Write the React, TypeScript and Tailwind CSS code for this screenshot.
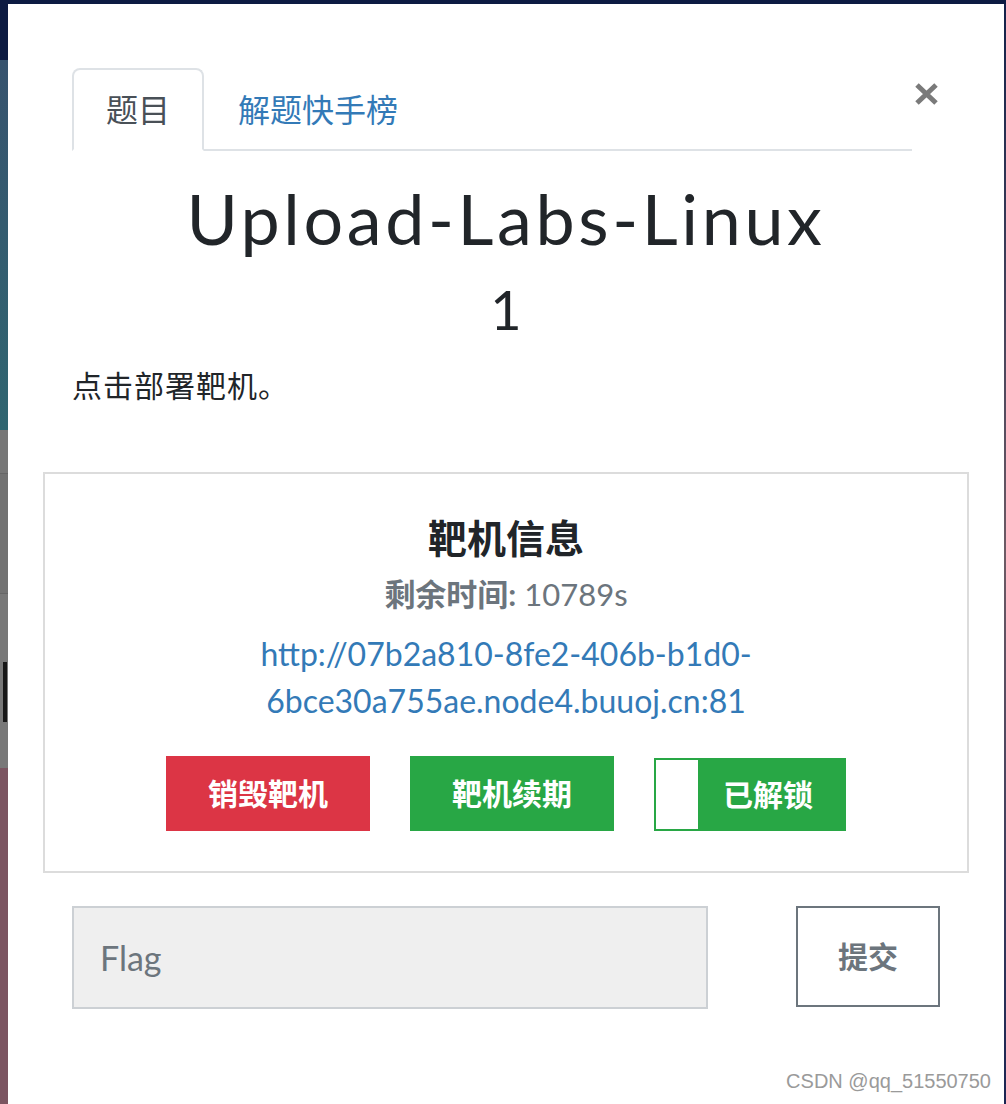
import { useState } from "react";

const font = { fontFamily: "Lato, 'Noto Sans CJK SC', sans-serif" };

// left edge of the page behind the modal overlay
const LeftEdge = () => (
  <div className="flex w-[8px] shrink-0 flex-col">
    <div className="h-[56px] bg-[#0d1b42]" />
    <div className="h-[370px] bg-gradient-to-b from-[#37536e] to-[#2f6570]" />
    <div className="h-[44px] border-b border-[#666] bg-[#777]" />
    <div className="h-[120px] border-b border-[#666] bg-[#727272]" />
    <div className="h-[68px] bg-[#787878]" />
    <div className="flex h-[60px] bg-[#787878] pl-[3px]">
      <div className="w-[4px] bg-[#181818]" />
    </div>
    <div className="h-[46px] bg-[#787878]" />
    <div className="flex-1 bg-[#7b5561]" />
  </div>
);

const RightEdge = () => (
  <div className="w-[3px] shrink-0 bg-gradient-to-b from-[#13214a] via-[#6d5a64] to-[#1a2452]" />
);

export default function App() {
  const [tab, setTab] = useState("challenge");
  const [flag, setFlag] = useState("");

  return (
    <div className="flex h-[1104px] w-[1006px] flex-col overflow-hidden bg-[#0d1b42]" style={font}>
      <div className="h-[4px] shrink-0 bg-[#0d1b42]" />
      <div className="flex flex-1">
        <LeftEdge />
        <div className="flex flex-1 flex-col bg-white px-[35px] pt-[64px]">
          {/* tabs + close */}
          <div className="flex items-start px-[29px]">
            <nav className="flex w-[840px] border-b-2 border-[#dee2e6]">
              <button
                onClick={() => setTab("challenge")}
                className={`-mb-[2px] h-[83px] rounded-t-[8px] border-2 px-[32px] text-[32px] ${
                  tab === "challenge"
                    ? "border-[#dee2e6] border-b-white bg-white text-[#495057]"
                    : "border-transparent text-[#337ab7]"
                }`}
              >
                题目
              </button>
              <button
                onClick={() => setTab("solves")}
                className={`-mb-[2px] h-[83px] rounded-t-[8px] border-2 px-[32px] text-[32px] ${
                  tab === "solves"
                    ? "border-[#dee2e6] border-b-white bg-white text-[#495057]"
                    : "border-transparent text-[#337ab7]"
                }`}
              >
                解题快手榜
              </button>
            </nav>
            <button className="ml-[3px] mt-[15px]" aria-label="Close">
              <svg width="23" height="22" viewBox="0 0 23 22">
                <path d="M2 2 L21 20 M21 2 L2 20" stroke="#7a7a7a" strokeWidth="5" />
              </svg>
            </button>
          </div>

          {/* title */}
          <h2 className="mt-[25px] text-center text-[70px] leading-[1.2] tracking-[3.6px] text-[#212529]">
            Upload-Labs-Linux
          </h2>
          <h3 className="mt-[18px] text-center text-[54px] leading-[1.2] text-[#212529]">1</h3>

          <p className="mt-[22px] px-[29px] text-[30px] leading-[40px] tracking-[1px] text-[#212529]">点击部署靶机。</p>

          {/* instance box */}
          <div className="mt-[67px] flex h-[401px] flex-col items-center border-2 border-[#dcdcdc] pt-[38px]">
            <h4 className="text-[39px] font-bold leading-[52px] text-[#212529]">靶机信息</h4>
            <p className="mt-[10px] text-[31px] leading-[40px] text-[#6c757d]">
              <span className="font-bold">剩余时间:</span> 10789s
            </p>
            <a href="#" className="mt-[16px] text-center text-[32px] leading-[47px] text-[#337ab7]">
              http://07b2a810-8fe2-406b-b1d0-
              <br />
              6bce30a755ae.node4.buuoj.cn:81
            </a>
            <div className="mt-[32px] flex items-start gap-[40px]">
              <button className="h-[75px] w-[204px] bg-[#dc3545] text-[30px] font-bold text-white">销毁靶机</button>
              <button className="h-[75px] w-[204px] bg-[#28a745] text-[30px] font-bold text-white">靶机续期</button>
              <div className="mt-[2px] flex h-[73px] w-[192px] border-2 border-[#28a745] bg-[#28a745]">
                <div className="w-[42px] bg-white" />
                <span className="flex flex-1 items-center justify-center pr-[6px] text-[30px] font-bold text-white">
                  已解锁
                </span>
              </div>
            </div>
          </div>

          {/* flag submit */}
          <div className="mt-[33px] flex items-start px-[29px]">
            <input
              value={flag}
              onChange={(e) => setFlag(e.target.value)}
              placeholder="Flag"
              className="h-[103px] w-[636px] border-2 border-[#ccd0d4] bg-[#efefef] px-[26px] text-[34px] text-[#495057] outline-none placeholder:text-[#6c757d]"
            />
            <button className="ml-[88px] h-[101px] w-[144px] border-2 border-[#6c757d] text-[30px] font-bold text-[#6c757d]">
              提交
            </button>
          </div>

          <div className="-mr-[22px] mt-auto flex justify-end pb-[8px]">
            <span className="text-[20px] text-[#9a9a9a]" style={{ fontFamily: "'Liberation Sans', sans-serif" }}>
              CSDN @qq_51550750
            </span>
          </div>
        </div>
        <RightEdge />
      </div>
    </div>
  );
}
